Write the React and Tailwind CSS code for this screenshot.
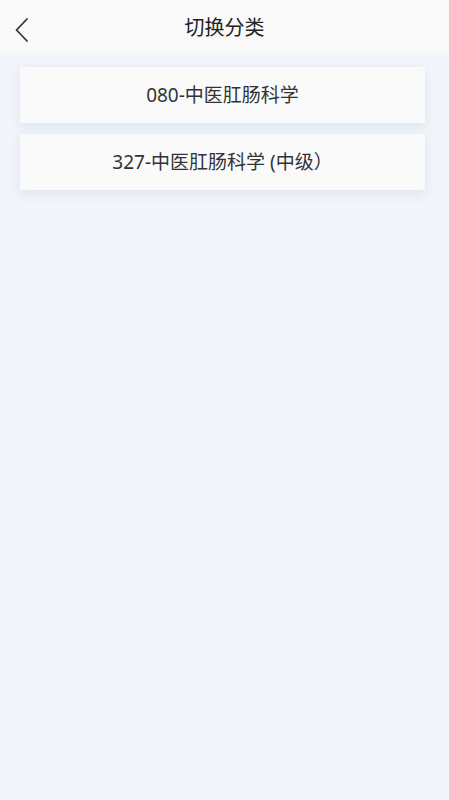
import React from "react";

const items = ["080-中医肛肠科学", "327-中医肛肠科学 (中级）"];

const App = () => {
  return (
    <div
      className="min-h-[800px] bg-[#f2f5f9] text-[#333]"
      style={{ fontFamily: '"Noto Sans", "Noto Sans CJK SC", sans-serif' }}
    >
      {/* Header */}
      <div className="relative h-[55px] bg-[#f9f9f9] flex items-center justify-center">
        <button className="absolute left-[13px] top-[17px] text-[#333]">
          <svg width="18" height="26" viewBox="0 0 18 26" fill="none">
            <path
              d="M14 2L3.5 13 14 24"
              stroke="currentColor"
              strokeWidth="1.8"
              strokeLinecap="round"
              strokeLinejoin="round"
            />
          </svg>
        </button>
        <h1 className="text-[20px] font-normal text-[#222]">切换分类</h1>
      </div>

      {/* List */}
      <div className="pl-[20px] pr-[24px] pt-[12px] flex flex-col gap-[11px]">
        {items.map((name) => (
          <div
            key={name}
            className="h-[56px] bg-[#fafafa] flex items-center justify-center text-[19px] shadow-[0_4px_10px_rgba(180,200,230,0.35)]"
          >
            {name}
          </div>
        ))}
      </div>
    </div>
  );
};

export default App;
